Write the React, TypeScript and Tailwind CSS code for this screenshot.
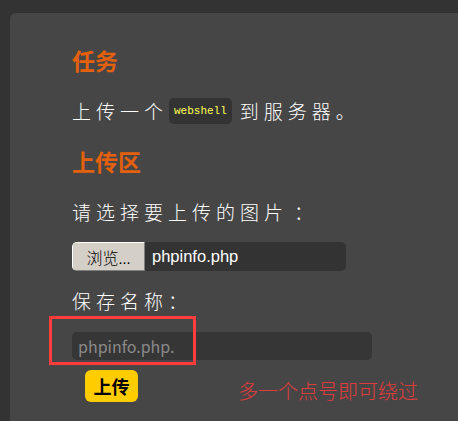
import React from "react";

const cjk = { fontFamily: '"Noto Sans CJK SC", "Liberation Sans", sans-serif' };

export default function App() {
  return (
    <div className="w-[458px] h-[421px] overflow-hidden bg-[#333333] pt-[13px] pl-[10px]" style={cjk}>
      <div className="h-full rounded-tl-[6px] bg-[#464646] pl-[62px] pt-[33px]">
        {/* 任务 */}
        <h2 className="text-[23px] leading-[28px] font-bold text-[#e3600d]">任务</h2>
        <div className="mt-[24px] flex items-center h-[26px] text-[19px] font-light tracking-[5px] text-white">
          <span>上传一个</span>
          <code className="ml-[1px] mr-[8px] flex items-center h-[26px] rounded-[5px] bg-[#333333] px-[5px] text-[11px] tracking-normal text-[#ffff55] font-['Liberation_Mono',monospace]">
            webshell
          </code>
          <span>到服务器。</span>
        </div>

        {/* 上传区 */}
        <h2 className="mt-[23px] text-[23px] leading-[28px] font-bold text-[#e3600d]">上传区</h2>
        <p className="mt-[25px] text-[19px] leading-[24px] font-light tracking-[5px] text-white">
          请选择要上传的图片<span className="ml-[6px]">：</span>
        </p>

        <div className="mt-[18px] flex h-[29px] w-[274px] rounded-[5px] bg-[#333333] overflow-hidden">
          <button className="w-[73px] h-full bg-[#d4d0c8] border border-t-white border-l-white border-r-[#808080] border-b-[#808080] rounded-l-[3px] text-[16px] font-light text-black">
            浏览...
          </button>
          <span className="ml-[7px] self-center text-[16.5px] text-white font-['Liberation_Sans',sans-serif]">phpinfo.php</span>
        </div>

        <p className="mt-[18px] text-[19px] leading-[24px] font-light tracking-[5px] text-white">保存名称：</p>

        <div className="relative mt-[19px]">
          <div className="absolute -left-[23px] -top-[16px] w-[147px] h-[49px] border-[3px] border-[#ff3c3c]" />
          <div className="flex items-center h-[28px] w-[300px] rounded-[5px] bg-[#363636] pl-[6px] text-[16px] text-[#8a8a8a]">
            phpinfo.php.
          </div>
        </div>

        <div className="mt-[10px] flex items-start">
          <button className="ml-[13px] w-[53px] h-[32px] rounded-[6px] bg-[#ffcc00] text-[18px] font-bold text-black">
            上传
          </button>
          <span className="ml-[100px] mt-[9px] text-[20px] leading-[24px] font-light text-[#e03c3c]">多一个点号即可绕过</span>
        </div>
      </div>
    </div>
  );
}
